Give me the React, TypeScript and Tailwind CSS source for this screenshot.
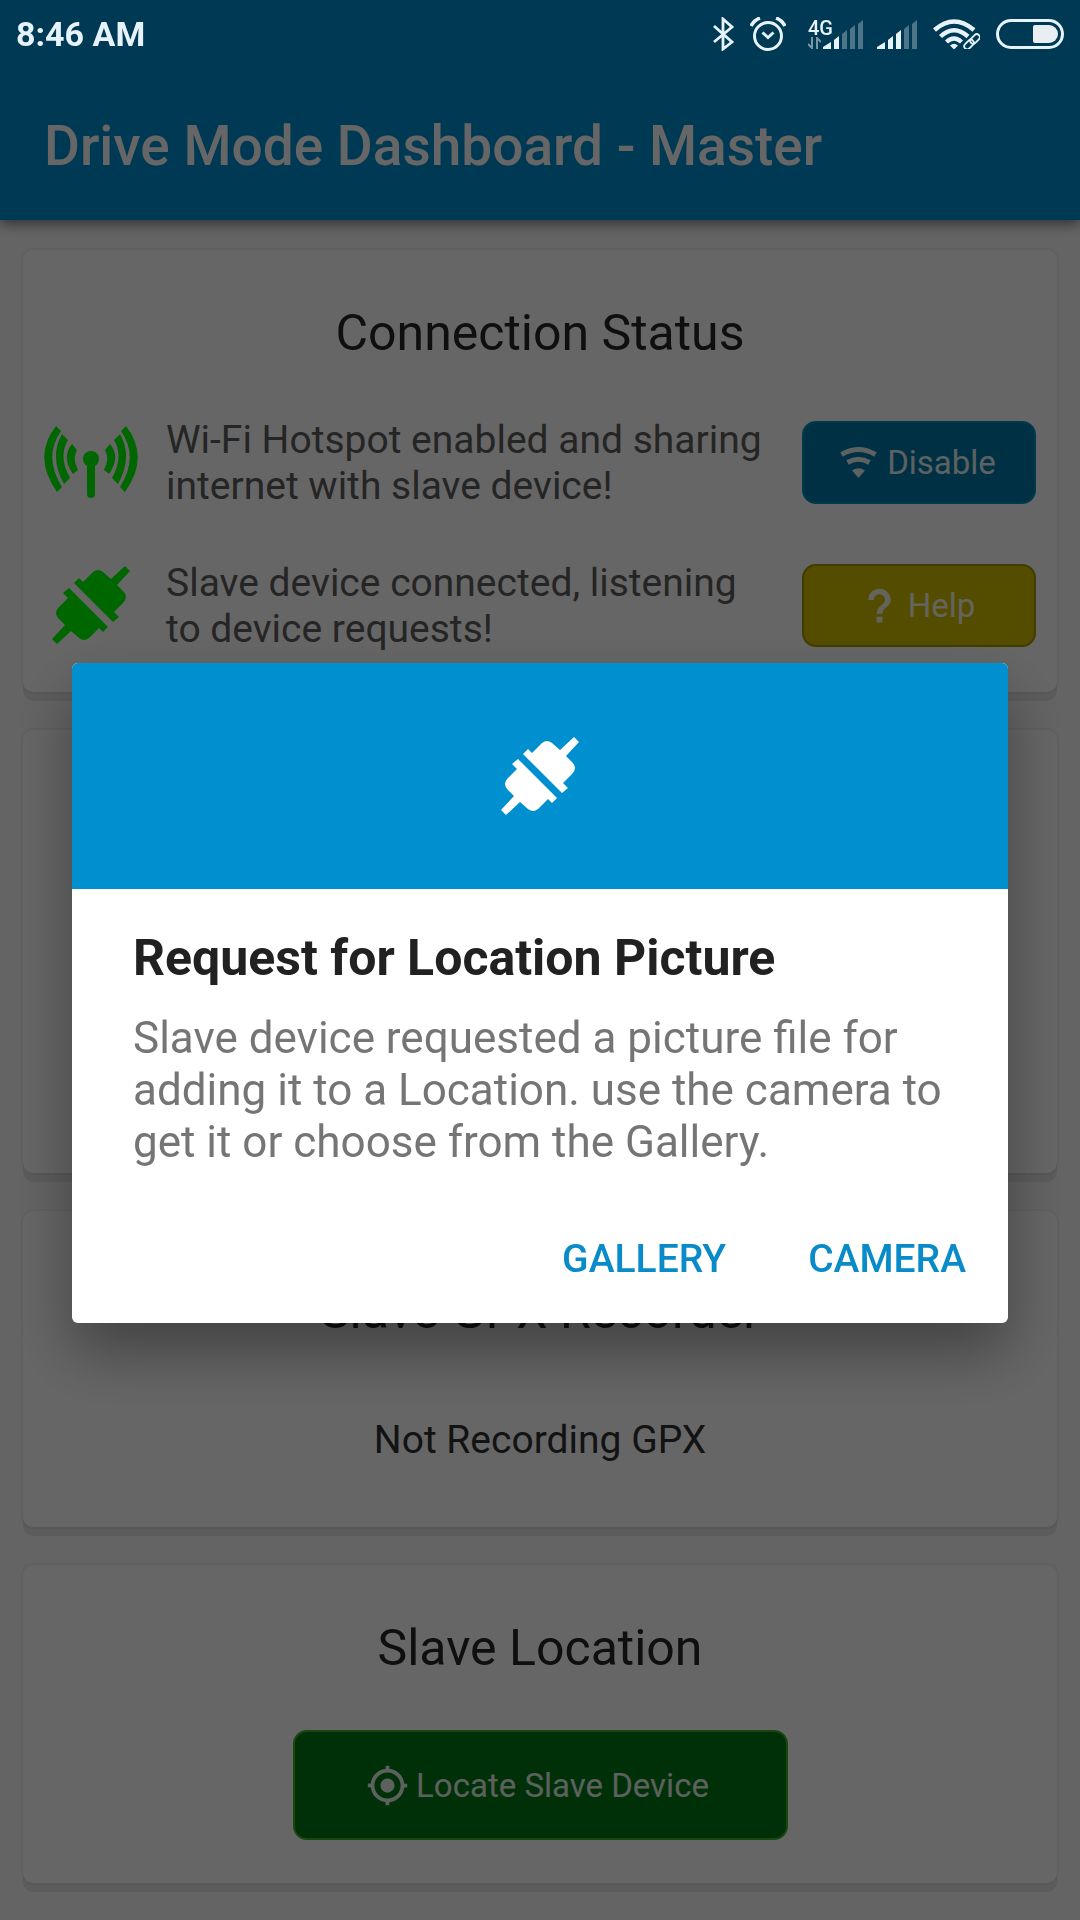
import { useId, type ReactNode } from "react";
import clsx from "clsx";
import { IoMdHelp, IoMdLocate } from "react-icons/io";

export default function App() {
  return (
    <div className="min-h-screen bg-[#fafafa] font-['Roboto','Noto_Sans',sans-serif] text-[#303030]">
      <header className="relative bg-[#008fcf] pt-[66px] shadow-[0_4px_12px_rgba(0,0,0,0.5)]">
        <h1 className="flex h-[154px] items-center px-11 pt-1.5 text-[55px] leading-none font-medium text-white">
          Drive Mode Dashboard - Master
        </h1>
      </header>

      <main className="flex flex-col gap-[38px] px-[23px] pt-[30px] pb-9">
        <Card title="Connection Status" className="min-h-[442px]">
          <div className="mt-[52px] flex flex-col gap-[49px] px-[21px]">
            <StatusRow icon={<BroadcastIcon />} text="Wi-Fi Hotspot enabled and sharing internet with slave device!">
              <ActionButton icon={<WifiIcon />} label="Disable" tone="blue" />
            </StatusRow>
            <StatusRow icon={<PlugIcon />} text="Slave device connected, listening to device requests!">
              <ActionButton icon={<IoMdHelp />} label="Help" tone="yellow" />
            </StatusRow>
          </div>
        </Card>

        <Card className="min-h-[443px]" />

        <Card title="Slave GPX Recorder" className="min-h-[316px] pt-[17px]">
          <p className="mt-[76px] text-center text-[39px] leading-[46px]">Not Recording GPX</p>
        </Card>

        <Card title="Slave Location" className="min-h-[318px]">
          <div className="mt-[52px] flex justify-center">
            <ActionButton icon={<IoMdLocate />} label="Locate Slave Device" tone="green" large />
          </div>
        </Card>
      </main>

      <div className="fixed inset-0 bg-black/60" />
      <RequestDialog />
      <StatusBar />
    </div>
  );
}

function Card({
  title,
  className,
  children,
}: {
  title?: string;
  className?: string;
  children?: ReactNode;
}) {
  return (
    <section
      className={clsx(
        "rounded-[10px] bg-white shadow-[0_0_0_2px_rgba(0,0,0,0.04),0_9px_0_#e6e6e6]",
        className,
      )}
    >
      {title && (
        <h2 className="pt-[53px] text-center text-[50px] leading-[60px] text-[#262626]">{title}</h2>
      )}
      {children}
    </section>
  );
}

function StatusRow({ icon, text, children }: { icon: ReactNode; text: string; children: ReactNode }) {
  return (
    <div className="flex items-center">
      <div className="flex w-[94px] shrink-0 justify-center text-[#00ff00]">{icon}</div>
      <p className="ml-7 flex-1 pt-0.5 pr-7 text-[39px] leading-[46px] text-[#5c5c5c]">{text}</p>
      {children}
    </div>
  );
}

const tones = {
  blue: "bg-[#0078a8] border-[#0090c4]",
  yellow: "bg-[#d2c000] border-[#a09800]",
  green: "bg-[#007814] border-[#41b028]",
};

function ActionButton({
  icon,
  label,
  tone,
  large,
}: {
  icon: ReactNode;
  label: string;
  tone: keyof typeof tones;
  large?: boolean;
}) {
  return (
    <button
      type="button"
      className={clsx(
        "flex shrink-0 items-center justify-center gap-1.5 rounded-[14px] border-2 pr-1.5 text-[33px] leading-none text-white/90",
        large ? "h-[110px] w-[495px]" : "h-[83px] w-[234px]",
        tones[tone],
      )}
    >
      <span className="flex w-[45px] justify-center text-[45px]">{icon}</span>
      {label}
    </button>
  );
}

function RequestDialog() {
  const titleId = useId();
  return (
    <div className="fixed inset-0 flex items-center justify-center px-[72px] pt-[66px]">
      <div
        role="dialog"
        aria-modal="true"
        aria-labelledby={titleId}
        className="w-full overflow-hidden rounded-md bg-white shadow-[0_30px_60px_rgba(0,0,0,0.35)]"
      >
        <div className="flex h-[226px] items-center justify-center bg-[#008fcf] text-white">
          <PlugIcon />
        </div>
        <div className="px-[61px] pt-10">
          <h2 id={titleId} className="text-[50px] leading-[58px] font-bold text-[#212121]">
            Request for Location Picture
          </h2>
          <p className="mt-[25px] text-[44px] leading-[52px] text-[#757575]">
            Slave device requested a picture file for adding it to a Location. use the camera to get
            it or choose from the Gallery.
          </p>
        </div>
        <div className="mt-[42px] flex justify-end gap-[30px] px-4 pb-[14px] text-[39px] font-medium text-[#0a8bc9]">
          <button type="button" className="h-[99px] px-[26px]">
            GALLERY
          </button>
          <button type="button" className="h-[99px] px-[26px]">
            CAMERA
          </button>
        </div>
      </div>
    </div>
  );
}

function StatusBar() {
  return (
    <div className="fixed inset-x-0 top-0 flex h-[66px] items-center justify-between px-4 pt-0.5 text-[#e6f3fb]">
      <span className="text-[34px] leading-none font-bold">8:46 AM</span>
      <div className="flex items-center">
        <BluetoothIcon />
        <AlarmIcon />
        <div className="ml-[22px] flex w-[25px] flex-col items-start text-[20px] leading-[18px] font-medium">
          <span>4G</span>
          <svg width="13" height="12" viewBox="0 0 13 12" fill="none" stroke="#7996a5" strokeWidth="2">
            <path d="M4 0v11L0 7M9 12V1l4 4" />
          </svg>
        </div>
        <SignalBars className="-ml-2.5" filled={2} />
        <SignalBars className="ml-3.5" filled={3} />
        <WifiLinkIcon />
        <svg className="ml-4" width="68" height="30" viewBox="0 0 68 30" fill="none">
          <rect x="1.5" y="1.5" width="65" height="27" rx="13.5" stroke="currentColor" strokeWidth="3" />
          <path d="M39 6h14a9 9 0 0 1 0 18H39a2 2 0 0 1-2-2V8a2 2 0 0 1 2-2z" fill="#e9eef2" />
        </svg>
      </div>
    </div>
  );
}

function BluetoothIcon() {
  return (
    <svg width="22" height="34" viewBox="0 0 22 34" fill="none" stroke="currentColor" strokeWidth="2.8">
      <path d="M1 9l18 16-9 7V2l9 8L1 25" />
    </svg>
  );
}

function AlarmIcon() {
  return (
    <svg
      className="ml-[15px]"
      width="36"
      height="34"
      viewBox="0 0 36 34"
      fill="none"
      stroke="currentColor"
      strokeWidth="3"
    >
      <circle cx="18" cy="19" r="13.5" />
      <path d="M1 9q3-6 9-8M35 9q-3-6-9-8" strokeWidth="3.6" />
      <path d="M12.500 15.500l5.500 5 5.500-5" />
    </svg>
  );
}

const bars = [
  "M0 29V27L8 22V29z",
  "M11 29V20L16 16V29z",
  "M19 29V14L24 10V29z",
  "M27 29V9L32 5V29z",
  "M35 29V4L40 0V29z",
];

function SignalBars({ filled, className }: { filled: number; className?: string }) {
  return (
    <svg className={className} width="40" height="29" viewBox="0 0 40 29">
      {bars.map((d, i) => (
        <path key={d} d={d} fill={i < filled ? "currentColor" : "#4c7589"} />
      ))}
    </svg>
  );
}

function WifiLinkIcon() {
  return (
    <svg
      className="ml-4"
      width="47"
      height="30"
      viewBox="0 0 47 30"
      fill="none"
      stroke="currentColor"
      strokeWidth="4.4"
    >
      <path d="M1.500 11Q21 -6 41 11M7.500 17.500Q21 5 35 17.500M13.500 23Q21 16 28.500 23" />
      <path d="M17 26.500q4-3.500 8 0l-4 4z" fill="currentColor" stroke="none" />
      <g strokeWidth="1.8">
        <rect x="-5.500" y="-3" width="11" height="6" rx="3" transform="translate(42 20) rotate(-45)" />
        <rect x="-5.500" y="-3" width="11" height="6" rx="3" transform="translate(36 25.500) rotate(-45)" />
      </g>
    </svg>
  );
}

function WifiIcon() {
  return (
    <svg width="37" height="31" viewBox="0 0 37 31" fill="none" stroke="currentColor" strokeWidth="5">
      <path d="M1.500 7.500Q18.500 -2.500 35.500 7.500M7.500 15.500Q18.500 9 29.500 15.500" />
      <path d="M12 23.500Q18.500 19 25 23.500L18.500 31z" fill="currentColor" stroke="none" />
    </svg>
  );
}

function BroadcastIcon() {
  const waves =
    "M12 0Q-12 31 13 66L18 61Q-1 31 17 5zM18 8Q5 31 20 58L26 52Q14 31 24 14zM28 18Q17 31 29 48L34 44Q28 33 33 24z";
  return (
    <svg width="94" height="72" viewBox="0 0 94 72" fill="currentColor">
      <path d={waves} />
      <path d={waves} transform="translate(94 0) scale(-1 1)" />
      <circle cx="47" cy="33" r="8" />
      <rect x="43" y="33" width="8" height="39" rx="4" />
    </svg>
  );
}

function PlugIcon() {
  const half = "M22 17L27 12L31 16L41 6Q46 2 51 6L59 13L73 0L78 5L65 19L71 25Q77 31 71 37L62 46L67 51L61 56z";
  return (
    <svg width="78" height="78" viewBox="0 0 78 78" fill="currentColor">
      <path d={half} />
      <path d={half} transform="rotate(180 39 39)" />
    </svg>
  );
}
